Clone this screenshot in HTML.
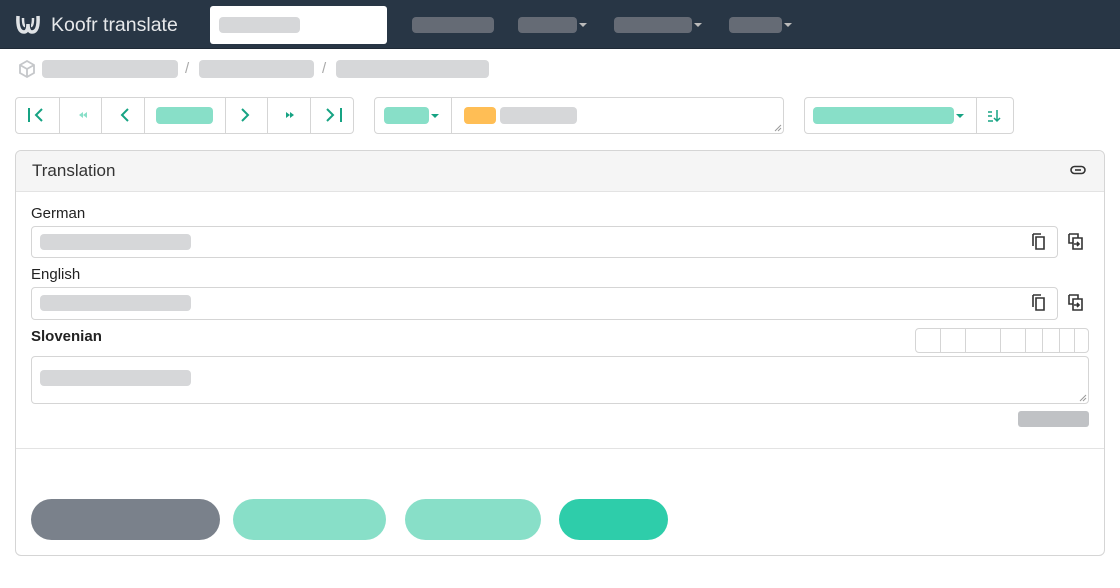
<!DOCTYPE html><html><head><style>
*{box-sizing:border-box;margin:0;padding:0}
body{width:1120px;height:588px;background:#fff;font-family:"Liberation Sans",sans-serif;position:relative;overflow:hidden;color:#222}
.a{position:absolute}
.g{background:#d6d7d9;border-radius:4px}
.bd{border:1px solid #d5d5d5;border-radius:4px}
.nv{background:#656b75;border-radius:4px}
.car{width:0;height:0;border-left:4px solid transparent;border-right:4px solid transparent;border-top:4px solid #bbb}
.tc{border-top-color:#16a383}
.vl{position:absolute;top:0;bottom:0;width:1px;background:#d5d5d5}
</style></head><body>
<div class="a" style="left:0;top:0;width:1120px;height:49px;background:#283645;border-bottom:1px solid #1f2a36"></div>
<svg class="a" style="left:14px;top:12px" width="28" height="24" viewBox="0 0 28 24"><path d="M4 4 Q3 20 10 20 Q14 20 14 12 Q14 20 18 20 Q25 20 24 4" fill="none" stroke="#e0e3e6" stroke-width="3.5"/><path d="M9 6 Q9 14 11 14 M19 6 Q19 14 17 14" fill="none" stroke="#e0e3e6" stroke-width="2.5"/></svg>
<div class="a" style="left:51px;top:14px;font-size:19.5px;color:#e6e8ea">Koofr translate</div>
<div class="a" style="left:210px;top:6px;width:177px;height:38px;background:#fff;border-radius:3px"></div>
<div class="a g" style="left:219px;top:17px;width:81px;height:16px"></div>
<div class="a nv" style="left:412px;top:17px;width:82px;height:16px"></div>
<div class="a nv" style="left:518px;top:17px;width:59px;height:16px"></div><div class="a car" style="left:579px;top:23px"></div>
<div class="a nv" style="left:614px;top:17px;width:78px;height:16px"></div><div class="a car" style="left:694px;top:23px"></div>
<div class="a nv" style="left:729px;top:17px;width:53px;height:16px"></div><div class="a car" style="left:784px;top:23px"></div>

<svg class="a" style="left:17px;top:59px" width="20" height="20" viewBox="0 0 20 20"><path d="M10 2 L17 6 L17 14 L10 18 L3 14 L3 6 Z M3 6 L10 10 L17 6 M10 10 L10 18" fill="none" stroke="#c5c7ca" stroke-width="1.8"/></svg>
<div class="a g" style="left:42px;top:60px;width:136px;height:18px"></div>
<div class="a" style="left:185px;top:60px;color:#aaa;font-size:15px">/</div>
<div class="a g" style="left:199px;top:60px;width:115px;height:18px"></div>
<div class="a" style="left:322px;top:60px;color:#aaa;font-size:15px">/</div>
<div class="a g" style="left:336px;top:60px;width:153px;height:18px"></div>

<div class="a bd" style="left:15px;top:97px;width:339px;height:37px">
<div class="vl" style="left:43px"></div><div class="vl" style="left:85px"></div><div class="vl" style="left:128px"></div><div class="vl" style="left:209px"></div><div class="vl" style="left:251px"></div><div class="vl" style="left:294px"></div>
</div>
<svg class="a" style="left:15px;top:97px" width="339" height="37"><g fill="none" stroke="#16a383" stroke-width="2"><path d="M14 11v14M27 12l-6 6 6 6M113 12l-6 6 6 6M227 12l6 6-6 6M312 12l6 6-6 6M326 11v14"/></g>
<g fill="#88dfc8"><path d="M64 18l4-3v6zM68 18l4-3v6z"/></g><g fill="#16a383"><path d="M275 18l-4-3v6zM279 18l-4-3v6z"/></g></svg>
<div class="a" style="left:156px;top:107px;width:57px;height:17px;background:#88dfc8;border-radius:4px"></div>

<div class="a bd" style="left:374px;top:97px;width:410px;height:37px"><div class="vl" style="left:76px"></div></div>
<svg class="a" style="left:774px;top:124px" width="8" height="8"><path d="M1 7L7 1M4 7L7 4" stroke="#999" stroke-width="1"/></svg>
<div class="a" style="left:384px;top:107px;width:45px;height:17px;background:#88dfc8;border-radius:4px"></div><div class="a car tc" style="left:431px;top:114px"></div>
<div class="a" style="left:464px;top:107px;width:32px;height:17px;background:#ffbe55;border-radius:4px"></div>
<div class="a g" style="left:500px;top:107px;width:77px;height:17px"></div>

<div class="a bd" style="left:804px;top:97px;width:210px;height:37px"><div class="vl" style="left:171px"></div></div>
<div class="a" style="left:813px;top:107px;width:141px;height:17px;background:#88dfc8;border-radius:4px"></div><div class="a car tc" style="left:956px;top:114px"></div>
<svg class="a" style="left:986px;top:107px" width="16" height="17"><g stroke="#16a383" stroke-width="1.5" fill="none"><path d="M2 5h4M2 9h4M2 14h5M11 3v11M8 11l3 3 3-3"/></g></svg>

<div class="a bd" style="left:15px;top:150px;width:1090px;height:406px;border-radius:6px">
<div style="height:41px;background:#f5f5f5;border-bottom:1px solid #e3e3e3;border-radius:6px 6px 0 0"></div>
<div class="a" style="left:0;right:0;top:297px;height:1px;background:#e3e3e3"></div></div>
<div class="a" style="left:32px;top:161px;font-size:17px;color:#333">Translation</div>
<svg class="a" style="left:1069px;top:163px" width="18" height="14"><rect x="2" y="3.5" width="14" height="7" rx="3.5" fill="none" stroke="#333" stroke-width="1.6"/><path d="M6 7h6" stroke="#333" stroke-width="1.6"/></svg>

<div class="a" style="left:31px;top:205px;font-size:15px">German</div>
<div class="a bd" style="left:31px;top:226px;width:1027px;height:32px"></div>
<div class="a g" style="left:40px;top:234px;width:151px;height:16px"></div>
<div class="a" style="left:31px;top:266px;font-size:15px">English</div>
<div class="a bd" style="left:31px;top:287px;width:1027px;height:33px"></div>
<div class="a g" style="left:40px;top:295px;width:151px;height:16px"></div>
<svg class="a" style="left:1029px;top:230px" width="70" height="90"><g fill="none" stroke="#333" stroke-width="1.6">
<path d="M4 4v12M4 4h8M7 7h8v12h-8z"/><path d="M4 65v12M4 65h8M7 68h8v12h-8z"/>
<path d="M40 4h9v4M40 4v9h4M44 8h9v11h-9zM45 14h5M48 12l2 2-2 2"/><path d="M40 65h9v4M40 65v9h4M44 69h9v11h-9zM45 75h5M48 73l2 2-2 2"/></g></svg>

<div class="a" style="left:31px;top:328px;font-size:15px;font-weight:bold">Slovenian</div>
<div class="a bd" style="left:915px;top:328px;width:174px;height:25px">
<div class="vl" style="left:24px"></div><div class="vl" style="left:49px"></div><div class="vl" style="left:84px"></div><div class="vl" style="left:109px"></div><div class="vl" style="left:126px"></div><div class="vl" style="left:143px"></div><div class="vl" style="left:158px"></div></div>
<div class="a bd" style="left:31px;top:356px;width:1058px;height:48px"></div>
<svg class="a" style="left:1079px;top:394px" width="8" height="8"><path d="M1 7L7 1M4 7L7 4" stroke="#999" stroke-width="1"/></svg>
<div class="a g" style="left:40px;top:370px;width:151px;height:16px"></div>
<div class="a" style="left:1018px;top:411px;width:71px;height:16px;background:#c0c2c5;border-radius:3px"></div>

<div class="a" style="left:31px;top:499px;width:189px;height:41px;background:#7a818b;border-radius:21px"></div>
<div class="a" style="left:233px;top:499px;width:153px;height:41px;background:#88dfc8;border-radius:21px"></div>
<div class="a" style="left:405px;top:499px;width:136px;height:41px;background:#88dfc8;border-radius:21px"></div>
<div class="a" style="left:559px;top:499px;width:109px;height:41px;background:#2ecdaa;border-radius:21px"></div>
</body></html>
